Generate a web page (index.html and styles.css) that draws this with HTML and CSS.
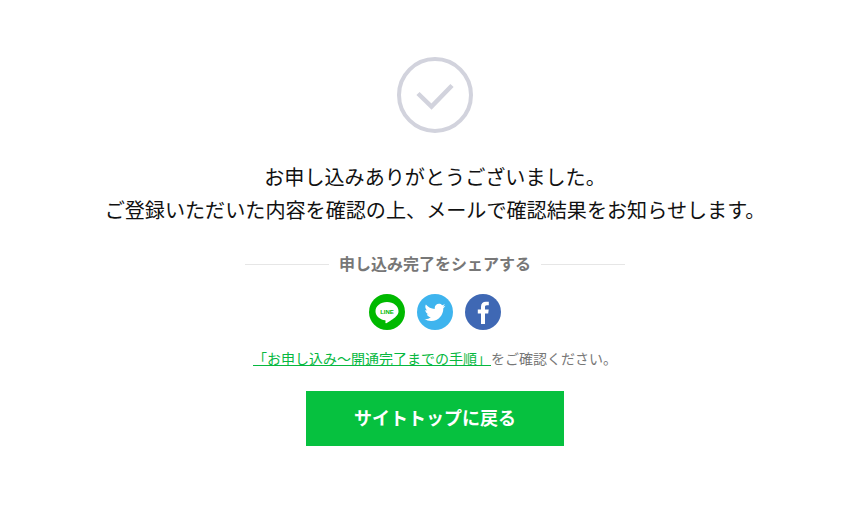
FILE: index.html
```html
<!DOCTYPE html>
<html lang="ja">
<head>
<meta charset="utf-8">
<title>お申し込み完了</title>
<link rel="stylesheet" href="styles.css">
</head>
<body>
<main class="page">
  <svg class="check" width="76" height="76" viewBox="0 0 76 76" aria-hidden="true">
    <circle cx="38" cy="38" r="36" fill="#fff" stroke="#d2d3dd" stroke-width="4"/>
    <path d="M21 36.500 L34.500 49.500 L55 28.500" fill="none" stroke="#d2d3dd" stroke-width="4.500"/>
  </svg>
  <div class="message">
    <p>お申し込みありがとうございました。</p>
    <p>ご登録いただいた内容を確認の上、メールで確認結果をお知らせします。</p>
  </div>
  <div class="share-title"><span class="share-label">申し込み完了をシェアする</span></div>
  <div class="share-icons">
    <svg class="icon" width="36" height="36" viewBox="0 0 36 36" aria-label="LINE">
      <circle cx="18" cy="18" r="18" fill="#00b900"/>
      <path d="M18 8C11.600 8 6.500 12.100 6.500 17.200C6.500 21.800 10.600 25.600 16.100 26.300C16.800 26.400 16.500 27.800 16.400 28.600C16.300 29.300 17 29.400 17.700 29C20 27.700 24.800 24.800 26.900 22.500C28.700 20.700 29.500 19.100 29.500 17.200C29.500 12.100 24.400 8 18 8Z" fill="#fff"/>
      <text x="18" y="19.700" class="line-text">LINE</text>
    </svg>
    <svg class="icon" width="36" height="36" viewBox="0 0 36 36" aria-label="Twitter">
      <circle cx="18" cy="18" r="18" fill="#3eb4ee"/>
      <path d="M28.500 11.800C27.700 12.200 26.900 12.400 26 12.500C26.900 11.900 27.600 11.100 27.900 10.100C27.100 10.600 26.100 11 25.100 11.200C24.300 10.300 23.200 9.800 22 9.800C19.600 9.800 17.700 11.700 17.700 14.100C17.700 14.400 17.700 14.800 17.800 15.100C14.200 14.900 11 13.200 8.900 10.600C8.500 11.200 8.300 12 8.300 12.800C8.300 14.300 9.100 15.600 10.200 16.400C9.500 16.400 8.800 16.200 8.300 15.900C8.300 18 9.800 19.800 11.800 20.200C11.200 20.400 10.500 20.400 9.800 20.300C10.400 22 12 23.200 13.800 23.300C11.900 24.800 9.800 25.400 7.500 25.100C9.400 26.300 11.700 27 14.100 27C22 27 26.300 20.400 26.300 14.700V14.200C27.200 13.500 27.900 12.700 28.500 11.800Z" fill="#fff"/>
    </svg>
    <svg class="icon" width="36" height="36" viewBox="0 0 36 36" aria-label="Facebook">
      <circle cx="18" cy="18" r="18" fill="#3f68b4"/>
      <path d="M20 30V19.500H23.200L23.700 15.600H20V13.200C20 12 20.300 11.300 21.900 11.300H23.800V7.800C23.500 7.800 22.300 7.700 20.900 7.700C18 7.700 16 9.500 16 12.700V15.600H12.800V19.500H16V30Z" fill="#fff"/>
    </svg>
  </div>
  <p class="guide"><a href="#">「お申し込み～開通完了までの手順」</a>をご確認ください。</p>
  <a class="back" href="#">サイトトップに戻る</a>
</main>
</body>
</html>
```

FILE: styles.css
```css
html, body {
  margin: 0;
  background: #fff;
}
body {
  font-family: "Noto Sans CJK JP", "Noto Sans", sans-serif;
}
.page {
  display: flex;
  flex-direction: column;
  align-items: center;
  width: 870px;
  padding-top: 57px;
}
.check {
  display: block;
}
p {
  margin: 0;
}
.message {
  margin-top: 27px;
  text-align: center;
  font-size: 20.1px;
  line-height: 33px;
  color: #111;
}
.share-title {
  display: flex;
  align-items: center;
  gap: 10px;
  width: 380px;
  height: 24px;
  margin-top: 26px;
  font-size: 16px;
  font-weight: 700;
  line-height: 24px;
  color: #777;
  white-space: nowrap;
}
.share-label {
  padding-bottom: 3px;
}
.share-title::before,
.share-title::after {
  content: "";
  flex: 1;
  height: 1px;
  background: #e6e6e6;
}
.share-icons {
  display: flex;
  gap: 12px;
  margin-top: 18px;
}
.icon {
  display: block;
}
.line-text {
  font-family: "Liberation Sans", sans-serif;
  font-size: 6px;
  font-weight: 700;
  fill: #00b900;
  text-anchor: middle;
}
.guide {
  margin-top: 18px;
  font-size: 14px;
  line-height: 20px;
  color: #777;
}
.guide a {
  color: #06b83f;
  text-decoration: underline;
}
.back {
  display: flex;
  align-items: center;
  justify-content: center;
  box-sizing: border-box;
  width: 258px;
  height: 55px;
  margin-top: 23px;
  padding-bottom: 3px;
  background: #06c13f;
  color: #fff;
  font-size: 18px;
  font-weight: 700;
  text-decoration: none;
}
```
